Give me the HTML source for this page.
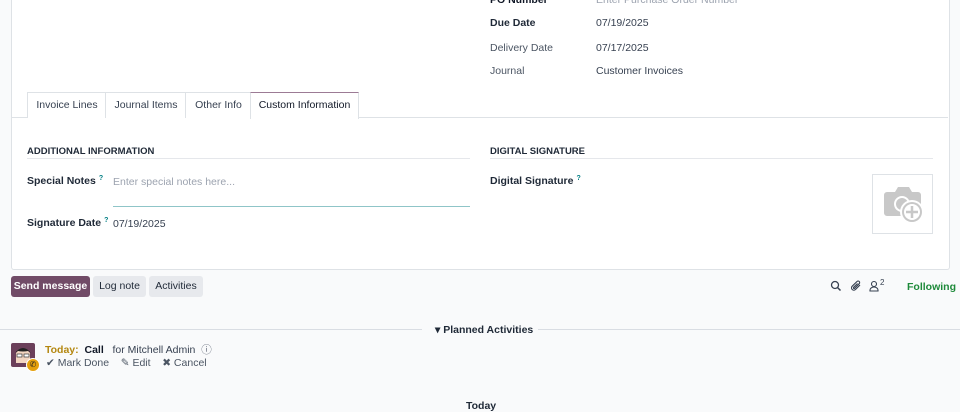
<!DOCTYPE html>
<html><head><style>
body{margin:0;width:960px;height:404px;background:#f9fafb;font-family:"Liberation Sans",sans-serif;font-size:10.5px;color:#374151;position:relative;overflow:hidden}
.a{position:absolute;white-space:nowrap}
.sheet{position:absolute;left:11px;top:-2px;width:937px;height:271px;background:#fff;border:1px solid #dee2e6;border-top:none;border-radius:0 0 3px 3px}
.b{font-weight:bold;color:#1f2937}
.tab{position:absolute;top:92px;height:25px;line-height:25px;border:1px solid #dee2e6;border-bottom:none;text-align:center;color:#374151;background:#fff}
.btn{position:absolute;top:276px;height:21px;line-height:21px;border-radius:3px;text-align:center;background:#e7e9ed;color:#1f2937}
.q{color:#017e84;font-size:7px;vertical-align:top;margin-left:3px;font-weight:bold}
</style></head><body>
<div class="sheet"></div>
<div class="a" style="left:490px;top:-6px;font-weight:bold;color:#111827">PO Number</div>
<div class="a" style="left:596px;top:-6px;color:#9ca3af">Enter Purchase Order Number</div>
<div class="a b" style="left:490px;top:17px">Due Date</div>
<div class="a" style="left:596px;top:17px">07/19/2025</div>
<div class="a" style="left:490px;top:42px;color:#4b5563">Delivery Date</div>
<div class="a" style="left:596px;top:42px">07/17/2025</div>
<div class="a" style="left:490px;top:65px;color:#4b5563">Journal</div>
<div class="a" style="left:596px;top:65px">Customer Invoices</div>
<div class="a" style="left:12px;top:117px;width:936px;height:1px;background:#dee2e6"></div>
<div class="tab" style="left:27px;width:78px">Invoice Lines</div>
<div class="tab" style="left:105px;width:80px">Journal Items</div>
<div class="tab" style="left:185px;width:65px">Other Info</div>
<div class="tab" style="left:250px;width:107px;height:26px;border-top:1px solid #9c7b95;color:#111827">Custom Information</div>
<div class="a b" style="left:27px;top:146px;font-size:9.5px;color:#1f2937">ADDITIONAL INFORMATION</div>
<div class="a" style="left:27px;top:158px;width:443px;height:1px;background:#e5e7eb"></div>
<div class="a b" style="left:490px;top:146px;font-size:9.5px;color:#1f2937">DIGITAL SIGNATURE</div>
<div class="a" style="left:490px;top:158px;width:443px;height:1px;background:#e5e7eb"></div>
<div class="a b" style="left:27px;top:175px">Special Notes<span class="q">?</span></div>
<div class="a" style="left:113px;top:176px;color:#9ca3af">Enter special notes here...</div>
<div class="a" style="left:113px;top:206px;width:357px;height:1px;background:#8fc5c8"></div>
<div class="a b" style="left:27px;top:217px">Signature Date<span class="q">?</span></div>
<div class="a" style="left:113px;top:218px">07/19/2025</div>
<div class="a b" style="left:490px;top:175px">Digital Signature<span class="q">?</span></div>
<div class="a" style="left:872px;top:174px;width:59px;height:58px;border:1px solid #dee2e6">
<svg width="59" height="58" viewBox="0 0 59 58"><path d="M14 17h8l3-5h11l3 5h6a3 3 0 0 1 3 3v18a3 3 0 0 1-3 3H14a3 3 0 0 1-3-3V20a3 3 0 0 1 3-3z" fill="#c8c8c8"/><circle cx="29" cy="29" r="8" fill="#fff"/><circle cx="29" cy="29" r="6" fill="#c8c8c8"/><circle cx="39" cy="37" r="12" fill="#fff"/><circle cx="39" cy="37" r="10" fill="#c8c8c8"/><circle cx="39" cy="37" r="8" fill="#fff"/><path d="M39 31v12M33 37h12" stroke="#c8c8c8" stroke-width="2.5"/></svg></div>
<div class="btn" style="left:11px;width:79px;background:#714b67;color:#fff;font-weight:bold">Send message</div>
<div class="btn" style="left:93px;width:53px">Log note</div>
<div class="btn" style="left:149px;width:54px">Activities</div>
<svg class="a" style="left:830px;top:280px" width="12" height="12" viewBox="0 0 12 12"><circle cx="5" cy="5" r="3.5" fill="none" stroke="#374151" stroke-width="1.3"/><path d="M7.5 7.5l3 3" stroke="#374151" stroke-width="1.5"/></svg>
<svg class="a" style="left:850px;top:280px" width="12" height="12" viewBox="0 0 12 12"><path d="M10 5L5.5 9.5a2.3 2.3 0 0 1-3.3-3.3L7 1.5a1.5 1.5 0 0 1 2.2 2.2L4.6 8.3a.7.7 0 0 1-1-1L7.5 3.5" fill="none" stroke="#374151" stroke-width="1.1"/></svg>
<svg class="a" style="left:869px;top:280px" width="10" height="12" viewBox="0 0 10 12"><circle cx="5" cy="4" r="2.5" fill="none" stroke="#374151" stroke-width="1.1"/><path d="M1 11v-1a4 3 0 0 1 8 0v1z" fill="none" stroke="#374151" stroke-width="1.1"/></svg>
<div class="a" style="left:880px;top:278px;font-size:8px">2</div>
<div class="a" style="left:907px;top:281px;color:#1e8a3a;font-weight:bold">Following</div>
<div class="a" style="left:0;top:329px;width:422px;height:1px;background:#d9dde3"></div>
<div class="a" style="left:538px;top:329px;width:422px;height:1px;background:#d9dde3"></div>
<div class="a b" style="left:435px;top:324px;color:#1f2937">▾ Planned Activities</div>
<div class="a" style="left:11px;top:343px;width:24px;height:24px;background:#6b3f5a;border-radius:2px;overflow:hidden">
<svg width="24" height="24" viewBox="0 0 24 24"><path d="M5 10q7-9 14 0v10H5z" fill="#f3d6c2"/><path d="M4 10q8-10 16 0l-3-2q-5 1-10 0z" fill="#222"/><rect x="6" y="11" width="5" height="3" fill="#fff" stroke="#333" stroke-width=".7"/><rect x="13" y="11" width="5" height="3" fill="#fff" stroke="#333" stroke-width=".7"/></svg></div>
<div class="a" style="left:26px;top:358px;width:12px;height:12px;border-radius:50%;background:#e5a00d;border:1px solid #fff;color:#222;font-size:8px;text-align:center;line-height:12px">✆</div>
<div class="a" style="left:45px;top:342px"><b style="color:#b48710">Today:</b>&nbsp; <b style="color:#111827">Call</b>&nbsp;&nbsp; for Mitchell Admin&nbsp; <span style="color:#6b7280">ⓘ</span></div>
<div class="a" style="left:46px;top:357px;color:#4b5563">✔ Mark Done&nbsp;&nbsp;&nbsp; ✎ Edit&nbsp;&nbsp;&nbsp; ✖ Cancel</div>
<div class="a b" style="left:466px;top:400px">Today</div>
</body></html>
